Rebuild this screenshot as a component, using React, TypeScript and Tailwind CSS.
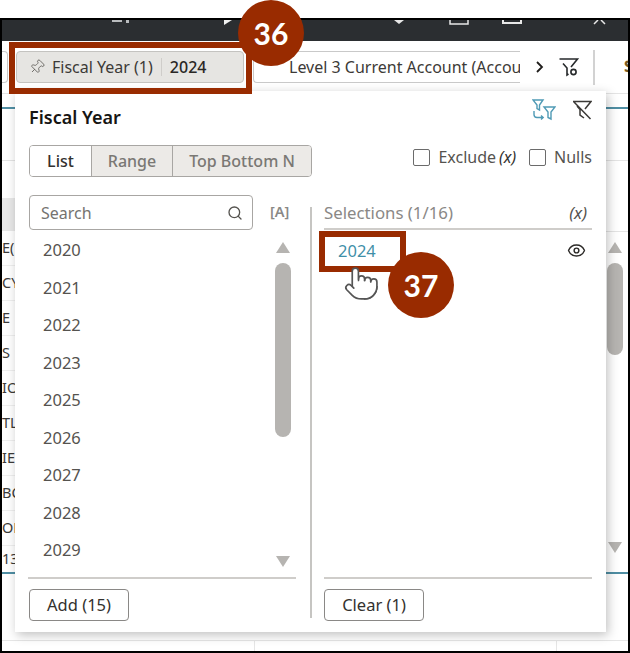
import { Eye, Pin, Pointer, Search } from 'lucide-react';

const years = ['2020', '2021', '2022', '2023', '2025', '2026', '2027', '2028', '2029'];
const rowLabels = ['E(', 'CY', 'E', 'S', 'IO', 'TL', 'IE', 'BC', 'ON'];

function ScrollBar({ thumb }: { thumb: string }) {
  return (
    <div className="flex h-full w-4 flex-col items-center">
      <div className="mt-[10px] h-0 w-0 border-x-[7px] border-b-[11px] border-x-transparent border-b-[#b6b4b1]" />
      <div className={`mt-[10px] w-4 rounded-lg bg-[#b6b4b1] ${thumb}`} />
      <div className="flex-1" />
      <div className="mb-[10px] h-0 w-0 border-x-[7px] border-t-[11px] border-x-transparent border-t-[#b6b4b1]" />
    </div>
  );
}

function Badge({ n, className }: { n: number; className: string }) {
  return (
    <div
      className={`absolute flex h-[66px] w-[66px] items-center justify-center rounded-full bg-[#992b00] font-['Lato',sans-serif] text-[30px] font-bold text-white ${className}`}
    >
      {n}
    </div>
  );
}

function Checkbox() {
  return <span className="h-[17px] w-[17px] rounded-[2px] border-[1.5px] border-[#6b6b6b] bg-white" />;
}

function PopupButton({ label, width }: { label: string; width: string }) {
  return (
    <button className={`h-[32px] rounded border border-[#8a8886] bg-white text-[16.5px] text-[#33312e] ${width}`}>
      {label}
    </button>
  );
}

export default function App() {
  return (
    <div className="relative h-[653px] w-[630px] overflow-hidden bg-white pt-[18px] font-['Noto_Sans',sans-serif]">
      <div className="flex h-[635px] flex-col border-x-2 border-y-2 border-black">
        {/* Dark app bar, only the bottom edge of its icons is visible */}
        <div className="h-[21px] shrink-0 bg-[#2b2e31]">
          <svg width="626" height="21" className="block">
            <path d="M110 0h10v2h-10zM124 0h3v3h-3z" fill="#b9bcbe" />
            <path d="M222 0h8l-8 5z" fill="#f2f2f2" />
            <path d="M392 0h10l-5 4z" fill="#e8e8e8" />
            <path d="M448 0v4h18v-4" fill="none" stroke="#e8e8e8" strokeWidth="1.5" />
            <path d="M501 0v3h18v-3" fill="none" stroke="#e8e8e8" strokeWidth="2" />
            <path d="M592 4l4-4M603 4l-4-4" stroke="#e8e8e8" strokeWidth="1.5" />
          </svg>
        </div>

        {/* Filter bar */}
        <div className="flex h-[53px] shrink-0 items-center overflow-hidden border-b border-[#e4e4e4]">
          <div className="h-[32px] w-[6px] shrink-0 rounded-r border border-l-0 border-[#c9c9c9]" />
          <div className="ml-[8px] flex h-[32px] w-[228px] shrink-0 items-center rounded border border-[#c4c3c0] bg-[#e6e5e2] pl-[12px] text-[16px] text-[#3c3a37]">
            <Pin size={16} strokeWidth={1.3} className="rotate-45 text-[#65635f]" />
            <span className="ml-[7px]">Fiscal Year (1)</span>
            <span className="mx-[8px] h-[18px] w-px bg-[#cfcdca]" />
            <span className="font-medium text-[#2a2825]">2024</span>
          </div>
          <div className="ml-[9px] flex h-[32px] w-[267px] shrink-0 items-center overflow-hidden whitespace-nowrap rounded-l border border-r-0 border-[#c9c9c9] pl-[34px] text-[16px] text-[#3c3a37]">
            <span className="ml-[1px]">Level 3 Current Account (Account)</span>
          </div>
          <svg width="12" height="14" viewBox="0 0 12 14" className="ml-[14px] shrink-0">
            <path d="M3 2l5 5-5 5" fill="none" stroke="#1f1d1b" strokeWidth="1.8" />
          </svg>
          <svg width="22" height="20" viewBox="0 0 22 20" className="ml-[12px] shrink-0">
            <path d="M1.5 2h18l-6.5 8M5 6.5l4 4.5v7l1.5-1" fill="none" stroke="#26292b" strokeWidth="1.6" />
            <circle cx="15.5" cy="15" r="2.6" fill="none" stroke="#26292b" strokeWidth="1.6" />
          </svg>
          <div className="ml-[13px] h-[35px] w-[2px] shrink-0 bg-[#d2d2d2]" />
          <span className="ml-[29px] shrink-0 text-[17px] font-bold text-[#7a5a1e]">$</span>
        </div>

        {/* Table behind the popup */}
        <div className="flex flex-1 flex-col">
          <div className="flex h-[478px]">
            <div className="w-[13px] text-[14.5px] text-[#3c3a37]">
              <div className="h-[15px] border-b-2 border-[#4f8ea3]" />
              <div className="h-[52px] border-b border-[#e4e4e4]" />
              <div className="h-[37px]" />
              <div className="h-[33px] bg-[#e8e8e8]" />
              {rowLabels.map((label) => (
                <div key={label} className="flex h-[35px] items-center whitespace-nowrap border-b border-[#efefef]">
                  {label}
                </div>
              ))}
              <div className="flex h-[26px] items-center">13</div>
            </div>
            <div className="flex-1" />
            <div className="w-[22px]">
              <div className="h-[15px] border-b-2 border-[#4f8ea3]" />
              <div className="h-[52px] border-b border-[#e4e4e4]" />
              <div className="h-[71px] border-b border-[#e4e4e4]" />
              <div className="h-[331px] pl-px">
                <ScrollBar thumb="h-[92px]" />
              </div>
            </div>
          </div>
          <div className="h-[2px] bg-[#4f8ea3]" />
          <div className="flex-1" />
          <div className="flex h-[11px] border-t border-[#e6e6e6]">
            <div className="w-[253px] border-r border-[#e6e6e6]" />
            <div className="w-[302px] border-r border-[#e6e6e6]" />
          </div>
        </div>
      </div>

      {/* Popup */}
      <div className="absolute left-[15px] top-[91px] flex h-[541px] w-[591px] flex-col bg-white px-[13px] pb-[11px] pt-[14px] shadow-[2px_3px_10px_rgba(0,0,0,0.25)]">
        <div className="flex h-[24px] items-center justify-between pl-px pr-[1px]">
          <span className="text-[18px] font-semibold text-[#161513]">Fiscal Year</span>
          <div className="-mt-[14px] flex items-center gap-[16px]">
            <svg width="24" height="22" viewBox="0 0 24 22" fill="none" stroke="#4f9ab5" strokeWidth="1.4">
              <path d="M1 1h10l-3.5 5v5L5 9.5V6zM12 8h11l-4 5v7l-3-1.5V13z" />
              <path d="M2 12v3.5a3 3 0 0 0 3 3h6M9 16.5l2.2 2L9 20.5" />
            </svg>
            <svg width="20" height="20" viewBox="0 0 20 20" fill="none" stroke="#3b3936" strokeWidth="1.5">
              <path d="M1 1.5h18l-6 7.5M5 6l3 3.5V15l4 3M1.5 1.5L18.5 19" />
            </svg>
          </div>
        </div>

        <div className="ml-px mt-[16px] flex h-[32px] items-center justify-between pr-[1px]">
          <div className="flex h-full overflow-hidden rounded border border-[#a8a6a3] text-[16px] font-medium text-[#7a7874]">
            <div className="flex w-[61px] items-center justify-center bg-white text-[#33312e]">List</div>
            <div className="flex w-[81px] items-center justify-center border-l border-[#a8a6a3] bg-[#eceae7]">Range</div>
            <div className="flex w-[139px] items-center justify-center border-l border-[#a8a6a3] bg-[#eceae7]">Top Bottom N</div>
          </div>
          <div className="-mt-[8px] flex items-center text-[16px] text-[#55534f]">
            <Checkbox />
            <span className="ml-[8px]">Exclude</span>
            <span className="ml-[3px] italic text-[#33312e]">(x)</span>
            <span className="ml-[13px] flex"><Checkbox /></span>
            <span className="ml-[8px]">Nulls</span>
          </div>
        </div>

        <div className="mt-[18px] flex flex-1">
          {/* Available values */}
          <div className="flex w-[268px] flex-col">
            <div className="flex h-[37px] shrink-0">
              <div className="ml-px flex h-[35px] w-[224px] items-center justify-between rounded border border-[#a8a6a3] pl-[11px] pr-[9px] text-[16px]">
                <span className="text-[#757370]">Search</span>
                <Search size={16} strokeWidth={2} className="text-[#55534f]" />
              </div>
              <span className="ml-[17px] mt-[6px] text-[14.5px] font-semibold text-[#8a8886]">[A]</span>
            </div>
            <div className="flex h-[345px] shrink-0">
              <div className="flex-1 pl-[15px]">
                {years.map((year) => (
                  <div key={year} className="flex h-[37.5px] items-center text-[16.5px] text-[#55534f]">
                    {year}
                  </div>
                ))}
              </div>
              <div className="mr-[5px]">
                <ScrollBar thumb="h-[174px]" />
              </div>
            </div>
            <div className="border-t-2 border-[#cfcdca] pl-px pt-[10px]">
              <PopupButton label="Add (15)" width="w-[100px]" />
            </div>
          </div>

          <div className="mb-[3px] ml-[14px] mt-[12px] w-[1.5px] bg-[#c6c5c2]" />

          {/* Current selections */}
          <div className="ml-[12.5px] flex w-[268px] flex-col">
            <div className="flex h-[35px] shrink-0 items-end justify-between border-b-2 border-[#cfcdca] pb-[3px] pr-[5px] text-[16.8px] text-[#8a8886]">
              <span>Selections (1/16)</span>
              <span className="italic text-[#55534f]">(x)</span>
            </div>
            <div className="flex h-[349px] shrink-0 border-b-2 border-[#cfcdca]">
              <div className="flex h-[42px] flex-1 items-center justify-between pl-[14px] pr-[6px] text-[16.5px] text-[#3f8fa8]">
                <span>2024</span>
                <Eye size={19} strokeWidth={1.8} className="-mt-[2px] text-[#2c2a28]" />
              </div>
            </div>
            <div className="pt-[10px]">
              <PopupButton label="Clear (1)" width="w-[100px]" />
            </div>
          </div>
        </div>
      </div>

      {/* Callouts */}
      <div className="absolute left-[9px] top-[42px] h-[52px] w-[243px] border-[6px] border-[#992b00]" />
      <Badge n={36} className="left-[238px] top-0" />
      <div className="absolute left-[319px] top-[231px] h-[41px] w-[87px] border-[6px] border-[#992b00]" />
      <Pointer size={37} strokeWidth={1.1} fill="white" className="absolute left-[343px] top-[265px] text-[#555]" />
      <Badge n={37} className="left-[388px] top-[252px]" />
    </div>
  );
}
